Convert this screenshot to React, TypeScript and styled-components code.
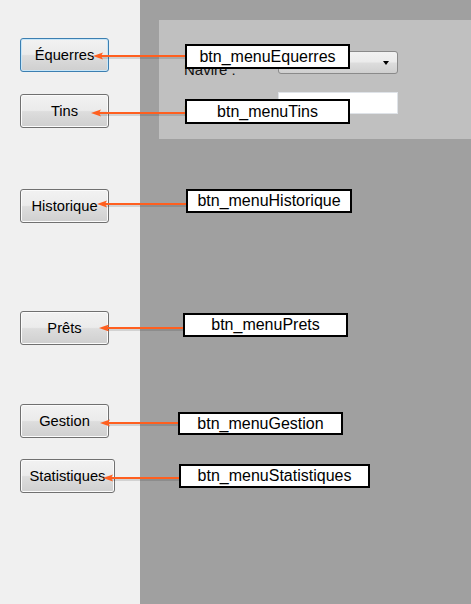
import React, { FC } from 'react';
import styled, { createGlobalStyle } from 'styled-components';

const GlobalStyle = createGlobalStyle`
  html,
  body {
    margin: 0;
    padding: 0;
    background: #a0a0a0;
  }
  body {
    font-family: 'Liberation Sans', Arial, sans-serif;
  }
`;

interface MenuItem {
  id: string;
  label: string;
  offset: number;
  width?: number;
  focused?: boolean;
}

interface Note {
  name: string;
  left: number;
  top: number;
  width: number;
  height: number;
  arrowY: number;
  tipX: number;
}

const MENU: MenuItem[] = [
  { id: 'equerres', label: 'Équerres', offset: 38, focused: true },
  { id: 'tins', label: 'Tins', offset: 22 },
  { id: 'historique', label: 'Historique', offset: 61 },
  { id: 'prets', label: 'Prêts', offset: 88 },
  { id: 'gestion', label: 'Gestion', offset: 59 },
  { id: 'statistiques', label: 'Statistiques', offset: 21, width: 95 },
];

const NOTES: Note[] = [
  { name: 'btn_menuEquerres', left: 185, top: 44, width: 165, height: 25, arrowY: 56, tipX: 93 },
  { name: 'btn_menuTins', left: 185, top: 99, width: 165, height: 25, arrowY: 113, tipX: 91 },
  { name: 'btn_menuHistorique', left: 186, top: 189, width: 166, height: 24, arrowY: 204, tipX: 97 },
  { name: 'btn_menuPrets', left: 183, top: 313, width: 165, height: 24, arrowY: 328, tipX: 99 },
  { name: 'btn_menuGestion', left: 178, top: 412, width: 165, height: 23, arrowY: 423, tipX: 100 },
  { name: 'btn_menuStatistiques', left: 179, top: 464, width: 191, height: 24, arrowY: 478, tipX: 103 },
];

const Screen = styled.div`
  position: relative;
  display: flex;
  width: 471px;
  height: 604px;
  overflow: hidden;
`;

const Sidebar = styled.nav`
  display: flex;
  flex-direction: column;
  align-items: flex-start;
  width: 140px;
  flex-shrink: 0;
  padding-left: 20px;
  box-sizing: border-box;
  background: #f0f0f0;
`;

const MenuButton = styled.button<{ $offset: number; $width?: number; $focused?: boolean }>`
  margin-top: ${(p) => p.$offset}px;
  width: ${(p) => p.$width ?? 89}px;
  height: 34px;
  padding: 0;
  border: 1px solid ${(p) => (p.$focused ? '#3c7fb1' : '#707070')};
  border-radius: 3px;
  box-shadow: inset 0 0 0 1px ${(p) => (p.$focused ? '#c8e6f8' : '#fbfbfb')};
  background: linear-gradient(#f2f2f2 0%, #ebebeb 48%, #dddddd 52%, #cfcfcf 100%);
  font-family: 'Liberation Sans', Arial, sans-serif;
  font-size: 14.7px;
  color: #000;
  white-space: nowrap;
  cursor: pointer;
`;

const Main = styled.main`
  flex: 1;
  padding: 20px 0 0 19px;
  background: #a0a0a0;
`;

const FormPanel = styled.section`
  display: grid;
  grid-template-columns: 94px 120px;
  grid-auto-rows: 23px;
  row-gap: 18px;
  height: 119px;
  padding: 31px 0 0 25px;
  box-sizing: border-box;
  background: #c0c0c0;
`;

const FieldLabel = styled.label`
  padding-top: 11px;
  font-size: 15px;
  line-height: 15px;
  color: #111;
  white-space: nowrap;
`;

const Combo = styled.div`
  position: relative;
  height: 23px;
  border: 1px solid #8a8a8a;
  border-radius: 3px;
  box-sizing: border-box;
  background: linear-gradient(#f2f2f2 0%, #ebebeb 48%, #dddddd 52%, #cfcfcf 100%);

  &::after {
    content: '';
    position: absolute;
    right: 8px;
    top: 9px;
    border-left: 3.5px solid transparent;
    border-right: 3.5px solid transparent;
    border-top: 4px solid #000;
  }
`;

const TextBox = styled.div`
  height: 22px;
  border: 1px solid #dfe3e8;
  box-sizing: border-box;
  background: #fff;
`;

const Callout = styled.div`
  position: absolute;
  display: flex;
  align-items: center;
  justify-content: center;
  border: 2px solid #000;
  box-sizing: border-box;
  background: #fff;
  font-family: 'Liberation Sans', Arial, sans-serif;
  font-size: 16px;
  color: #000;
  white-space: nowrap;
`;

const ArrowSvg = styled.svg`
  position: absolute;
  overflow: visible;
`;

const Annotation: FC<{ note: Note }> = ({ note }) => {
  const length = note.left - note.tipX;
  return (
    <>
      <ArrowSvg
        width={length}
        height={12}
        style={{ left: note.tipX, top: note.arrowY - 6 }}
        viewBox={`0 0 ${length} 12`}
      >
        <line x1={8} y1={8} x2={length} y2={8} stroke="rgba(0,0,0,0.12)" strokeWidth={2} />
        <line x1={8} y1={6} x2={length} y2={6} stroke="#ff5f1f" strokeWidth={2} />
        <polygon points={`0,6 10,2.5 8,6 10,9.5`} fill="#ff5f1f" />
      </ArrowSvg>
      <Callout style={{ left: note.left, top: note.top, width: note.width, height: note.height }}>
        {note.name}
      </Callout>
    </>
  );
};

const App: FC = () => {
  return (
    <>
      <GlobalStyle />
      <Screen>
        <Sidebar>
          {MENU.map((item) => (
            <MenuButton key={item.id} $offset={item.offset} $width={item.width} $focused={item.focused}>
              {item.label}
            </MenuButton>
          ))}
        </Sidebar>
        <Main>
          <FormPanel>
            <FieldLabel>Navire :</FieldLabel>
            <Combo />
            <FieldLabel>Date Éq. :</FieldLabel>
            <TextBox />
          </FormPanel>
        </Main>
        {NOTES.map((note) => (
          <Annotation key={note.name} note={note} />
        ))}
      </Screen>
    </>
  );
};

export default App;
